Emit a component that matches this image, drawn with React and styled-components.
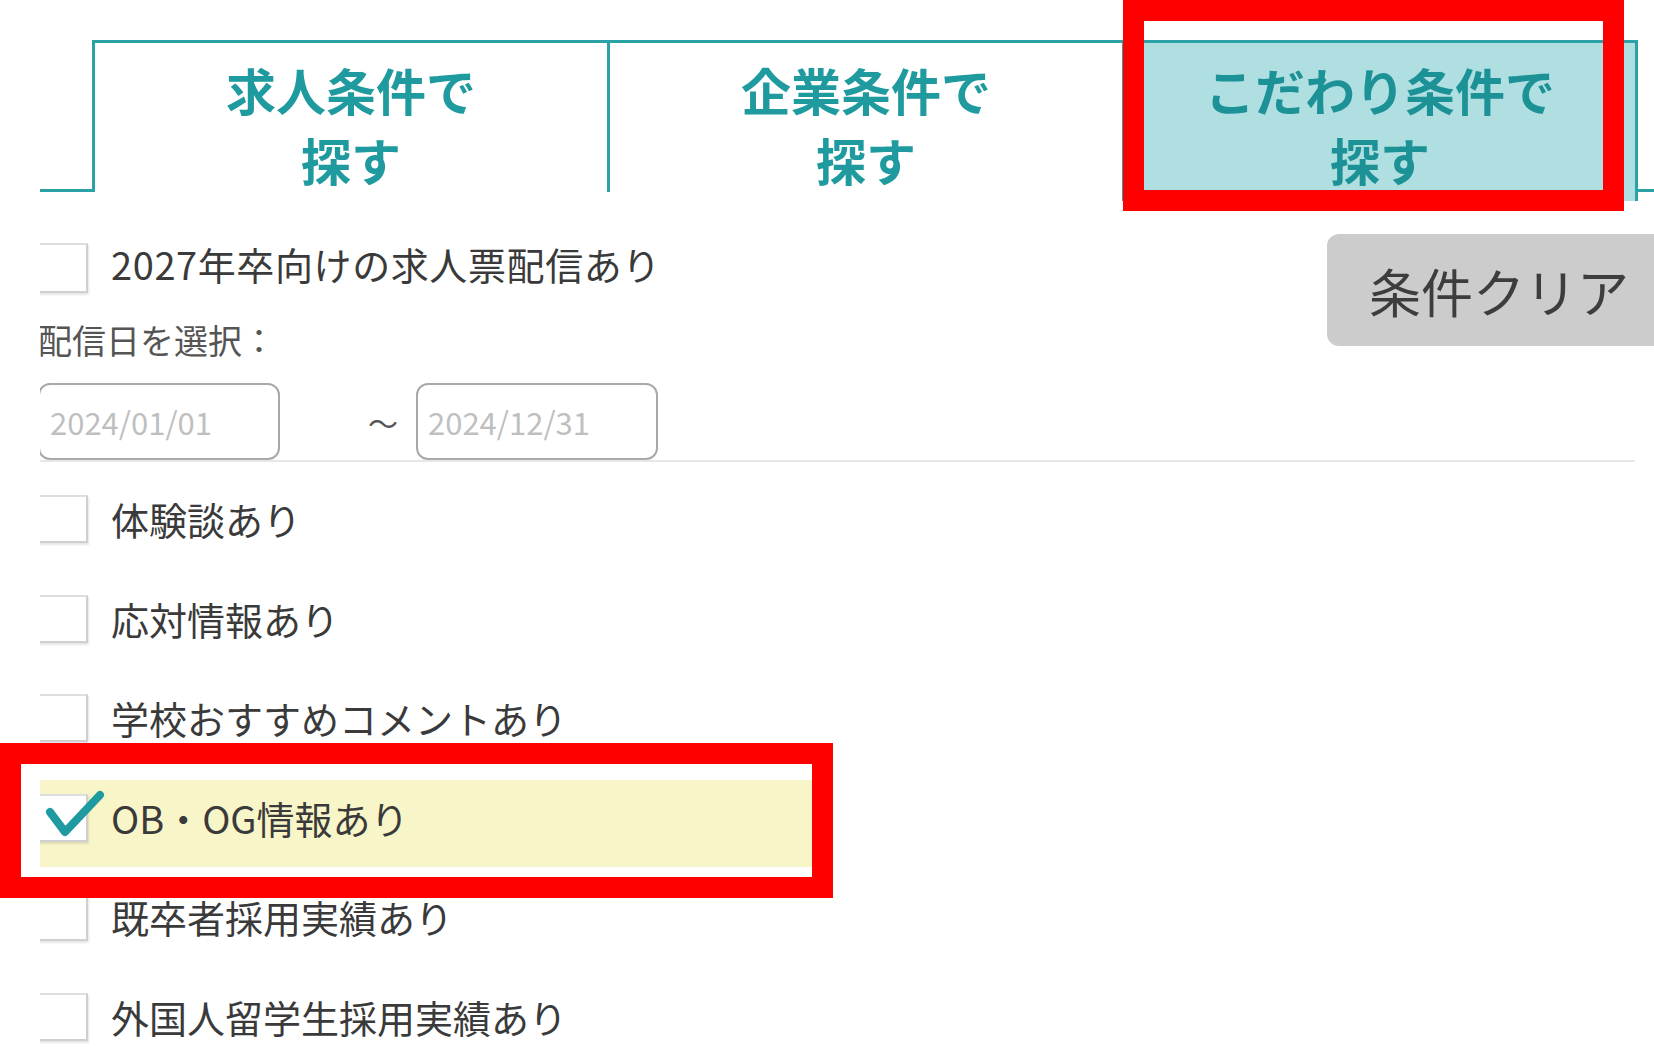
import { useState } from 'react';
import styled, { createGlobalStyle } from 'styled-components';

const TEAL = '#1f9a9f';
const TEAL_LINE = '#2aa2a6';

const GlobalStyle = createGlobalStyle`
  html, body {
    margin: 0;
    padding: 0;
    background: #fff;
  }
  body {
    font-family: "Noto Sans CJK JP", "Noto Sans", sans-serif;
    color: #3a3a3a;
  }
`

export const Page = styled.div`
  position: relative;
  width: 1654px;
  height: 1063px;
  overflow: hidden;
  background: #fff;
`
export const TabBar = styled.div`
  display: flex;
  align-items: flex-start;
  height: 152px;
  margin-top: 40px;
  padding-left: 40px;
`
export const Stub = styled.div`
  box-sizing: border-box;
  height: 152px;
  width: ${p => p.$width || 'auto'};
  flex: ${p => (p.$grow ? '1' : 'none')};
  border-bottom: 3px solid ${TEAL_LINE};
`
export const Tab = styled.div`
  box-sizing: border-box;
  flex: none;
  width: ${p => (p.$last ? '516px' : '515px')};
  height: ${p => (p.$active ? '161px' : '152px')};
  padding-top: 11px;
  border-top: 3px solid ${TEAL_LINE};
  border-left: 3px solid ${TEAL_LINE};
  border-right: ${p => (p.$last ? `3px solid ${TEAL_LINE}` : 'none')};
  background: ${p => (p.$active ? '#b0dfe2' : '#fff')};
  color: ${p => (p.$active ? '#1c9297' : TEAL)};
  font-size: 50px;
  font-weight: 700;
  line-height: 70px;
  text-align: center;
  cursor: pointer;
`
export const Body = styled.div`
  margin-left: 40px;
  width: 1595px;
  clip-path: inset(0 -200px 0 0);
`
export const TopArea = styled.div`
  display: flex;
  justify-content: space-between;
  align-items: flex-start;
  padding-top: 42px;
  border-bottom: 2px solid #e8e8e8;
`
export const FilterColumn = styled.div`
  display: flex;
  flex-direction: column;
  margin-top: 9px;
`
export const CheckLine = styled.label`
  display: flex;
  align-items: center;
  gap: 23px;
  font-size: 38px;
  line-height: 1;
  letter-spacing: ${p => p.$spacing || 'normal'};
  color: #3a3a3a;
  cursor: pointer;
`
export const LineText = styled.span`
  position: relative;
  top: ${p => p.$shift || '0'};
`
export const Box = styled.span`
  position: relative;
  flex: none;
  box-sizing: border-box;
  width: 50px;
  height: ${p => p.$height || '48px'};
  margin-left: -2px;
  background: #fff;
  border: 2px solid #dedede;
  border-right-color: #cfcfcf;
  border-bottom-color: #cfcfcf;
  box-shadow: 1px 2px 2px rgba(0, 0, 0, 0.1);
`
export const Check = styled.svg`
  position: absolute;
  left: -2px;
  top: -12px;
  width: 70px;
  height: 60px;
  overflow: visible;
`
export const DateLabel = styled.div`
  margin: 27px 0 0 -2px;
  font-size: 34px;
  line-height: 40px;
  color: #555;
`
export const DateRow = styled.div`
  display: flex;
  align-items: center;
  margin-top: 23px;
`
export const DateInput = styled.input`
  box-sizing: border-box;
  width: 242px;
  height: 77px;
  margin-left: ${p => p.$offset || '0'};
  padding: 0 10px;
  border: 2px solid #a9a9a9;
  border-radius: 12px;
  background: #fff;
  font-family: inherit;
  font-size: 31px;
  color: #555;
  outline: none;

  &::placeholder {
    color: #bfbfbf;
  }
`
export const Tilde = styled.span`
  margin: 0 18px 0 88px;
  font-size: 30px;
  color: #555;
`
export const ClearButton = styled.button`
  box-sizing: border-box;
  width: 360px;
  height: 112px;
  margin-right: -52px;
  padding: 0 0 0 42px;
  border: none;
  border-radius: 12px;
  background: #cccccc;
  color: #3d3d3d;
  font-family: inherit;
  font-size: 52px;
  text-align: left;
  cursor: pointer;
`
export const OptionList = styled.div`
  display: flex;
  flex-direction: column;
  gap: 12.6px;
  padding-top: 19px;
`
export const OptionRow = styled.div`
  box-sizing: border-box;
  display: flex;
  align-items: center;
  width: 772px;
  height: 87px;
  padding-bottom: 11px;
  background: ${p => (p.$checked ? '#f8f5c8' : 'transparent')};
`
export const Marker = styled.div`
  position: absolute;
  left: ${p => p.$x}px;
  top: ${p => p.$y}px;
  width: ${p => p.$w}px;
  height: ${p => p.$h}px;
  box-sizing: border-box;
  border: 21px solid #ff0000;
  pointer-events: none;
`

const TABS = [
  ['求人条件で', '探す'],
  ['企業条件で', '探す'],
  ['こだわり条件で', '探す'],
];

const OPTIONS = [
  '体験談あり',
  '応対情報あり',
  '学校おすすめコメントあり',
  'OB・OG情報あり',
  '既卒者採用実績あり',
  '外国人留学生採用実績あり',
];

function CheckBox({ checked, height }) {
  return (
    <Box $height={height}>
      {checked && (
        <Check viewBox="0 0 70 60">
          <polyline
            points="12,28 27,48 62,11"
            fill="none"
            stroke="#1f9aa0"
            strokeWidth="8"
            strokeLinecap="round"
            strokeLinejoin="round"
          />
        </Check>
      )}
    </Box>
  );
}

function App() {
  const [activeTab, setActiveTab] = useState(2);
  const [delivery, setDelivery] = useState(false);
  const [checked, setChecked] = useState({ 'OB・OG情報あり': true });

  const toggle = (label) => {
    setChecked({ ...checked, [label]: !checked[label] });
  };

  return (
    <>
      <GlobalStyle />
      <Page>
        <TabBar>
          <Stub $width="52px" />
          {TABS.map((lines, i) => (
            <Tab
              key={lines[0]}
              $active={activeTab === i}
              $last={i === TABS.length - 1}
              onClick={() => setActiveTab(i)}
            >
              {lines[0]}
              <br />
              {lines[1]}
            </Tab>
          ))}
          <Stub $grow />
        </TabBar>

        <Body>
          <TopArea>
            <FilterColumn>
              <CheckLine $spacing="0.6px" onClick={() => setDelivery(!delivery)}>
                <CheckBox checked={delivery} height="50px" />
                <LineText $shift="-4px">2027年卒向けの求人票配信あり</LineText>
              </CheckLine>
              <DateLabel>配信日を選択：</DateLabel>
              <DateRow>
                <DateInput $offset="-2px" placeholder="2024/01/01" />
                <Tilde>～</Tilde>
                <DateInput placeholder="2024/12/31" />
              </DateRow>
            </FilterColumn>
            <ClearButton onClick={() => setChecked({})}>条件クリア</ClearButton>
          </TopArea>

          <OptionList>
            {OPTIONS.map((label) => (
              <OptionRow key={label} $checked={!!checked[label]}>
                <CheckLine onClick={() => toggle(label)}>
                  <CheckBox checked={!!checked[label]} />
                  {label}
                </CheckLine>
              </OptionRow>
            ))}
          </OptionList>
        </Body>

        <Marker $x={1123} $y={0} $w={501} $h={211} />
        <Marker $x={0} $y={743} $w={833} $h={155} />
      </Page>
    </>
  );
}

export default App;
